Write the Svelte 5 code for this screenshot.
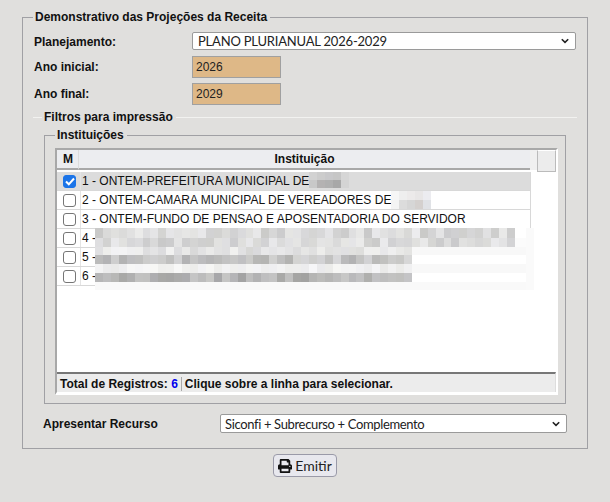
<script>
  // deterministic pixel noise for the redacted areas
  let n = 7;
  function noise() {
    n = (n * 137 + 59) % 1009;
    return n / 1009 - 0.5;
  }

  function cells(count, base, spread) {
    const out = [];
    for (let i = 0; i < count; i++) {
      const v = Math.round(base + noise() * spread);
      out.push(`rgb(${v},${v},${v + Math.round(noise() * 5)})`);
    }
    return out;
  }

  const bands = [
    { h: 10, cells: cells(53, 219, 36), tail: "#fff" },
    { h: 9, cells: cells(53, 218, 34), tail: "#fbfbfb" },
    { h: 8, cells: cells(40, 229, 28), tail: "#f8f8f8" },
    { h: 9, cells: cells(40, 197, 38), tail: "#fff" },
    { h: 9, cells: cells(40, 241, 14), tail: "#f8f8f8" },
    { h: 9, cells: cells(40, 182, 40), tail: "#fff" },
    { h: 8, cells: [], tail: "#f9f9f9" },
  ];

  const patchOne = [
    { h: 8, cells: ["#d2d2d2", "#cccccc", "#c8c8ca", "#c6c6c6", "#d6d6d6"] },
    { h: 8, cells: ["#c8c8c8", "#b4b2b2", "#b0b0b0", "#a8a8a8", "#d4d4d4"] },
  ];
  const patchTwo = [
    { h: 9, cells: ["#f6f6f6", "#eeeeee", "#eceaea", "#e8e6e6", "#ececf0"] },
    { h: 9, cells: ["#f4f4f4", "#dcdcdc", "#d6d6d6", "#d4d0ce", "#e0e2e6"] },
  ];
</script>

{#snippet mosaic(list)}
  {#each list as band}
    <div class="band" style:height="{band.h}px" style:background={band.tail}>
      {#each band.cells as c}
        <b style:background={c}></b>
      {/each}
    </div>
  {/each}
{/snippet}

{#snippet chevron()}
  <svg width="8" height="6" viewBox="0 0 8 6"><path d="M.8 1.2L4 4.4l3.200-3.200" fill="none" stroke="#222" stroke-width="1.6" /></svg>
{/snippet}

<main class="page">
  <fieldset class="outer">
    <legend>Demonstrativo das Projeções da Receita</legend>

    <div class="field plan">
      <span class="label">Planejamento:</span>
      <div class="select wide">
        <span>PLANO PLURIANUAL 2026-2029</span>
        {@render chevron()}
      </div>
    </div>
    <div class="field">
      <span class="label">Ano inicial:</span>
      <div class="year">2026</div>
    </div>
    <div class="field">
      <span class="label">Ano final:</span>
      <div class="year">2029</div>
    </div>

    <fieldset class="filters">
      <legend>Filtros para impressão</legend>

      <fieldset class="inst">
        <legend>Instituições</legend>

        <div class="grid">
          <div class="head">
            <div class="hm">M</div>
            <div class="ht">Instituição</div>
            <div class="gutter"></div>
            <div class="corner"></div>
          </div>
          <div class="body">
            <div class="row selected">
              <span class="check on">
                <svg width="10" height="9" viewBox="0 0 10 9"><path d="M1 4.500l2.800 2.800L9 1.500" fill="none" stroke="#fff" stroke-width="2" /></svg>
              </span>
              <div class="cell">1 - ONTEM-PREFEITURA MUNICIPAL DE<div class="patch">{@render mosaic(patchOne)}</div></div>
            </div>
            <div class="row">
              <span class="check"></span>
              <div class="cell">2 - ONTEM-CAMARA MUNICIPAL DE VEREADORES DE<div class="patch">{@render mosaic(patchTwo)}</div></div>
            </div>
            <div class="row">
              <span class="check"></span>
              <div class="cell">3 - ONTEM-FUNDO DE PENSAO E APOSENTADORIA DO SERVIDOR</div>
            </div>
            {#each [4, 5, 6] as id}
              <div class="row">
                <span class="check"></span>
                <div class="cell">{id} -</div>
              </div>
            {/each}
            <div class="blur">{@render mosaic(bands)}</div>
          </div>
          <div class="foot">
            <span class="total">Total de Registros: <em>6</em></span>
            <span class="hint">Clique sobre a linha para selecionar.</span>
          </div>
        </div>
      </fieldset>

      <div class="field resource">
        <span class="label">Apresentar Recurso</span>
        <div class="select res">
          <span>Siconfi + Subrecurso + Complemento</span>
          {@render chevron()}
        </div>
      </div>
    </fieldset>
  </fieldset>

  <div class="actions">
    <button type="button">
      <svg width="14" height="14" viewBox="0 0 512 512"><path fill="#111" d="M448 192V77.250c0-8.490-3.370-16.620-9.370-22.630L393.370 9.370c-6-6-14.140-9.370-22.630-9.370H96C78.330 0 64 14.330 64 32v160c-35.350 0-64 28.650-64 64v112c0 8.840 7.160 16 16 16h48v96c0 17.670 14.330 32 32 32h320c17.670 0 32-14.330 32-32v-96h48c8.840 0 16-7.160 16-16V256c0-35.350-28.650-64-64-64zm-64 256H128v-96h256v96zm0-224H128V64h192v48c0 8.840 7.160 16 16 16h48v96zm48 72c-13.250 0-24-10.750-24-24 0-13.260 10.750-24 24-24s24 10.740 24 24c0 13.250-10.750 24-24 24z" /></svg>
      Emitir
    </button>
  </div>
</main>

<style>
  :global(body) {
    margin: 0;
    background: #e0dfdd;
  }

  .page {
    width: 610px;
    height: 502px;
    padding: 10px 22px 0 22px;
    box-sizing: border-box;
    font-family: "Liberation Sans", Arial, sans-serif;
    font-size: 12px;
    color: #111;
    overflow: hidden;
  }

  fieldset {
    margin: 0;
    min-width: 0;
    border: 1px solid #a0a0a4;
    box-sizing: border-box;
  }

  legend {
    font-weight: bold;
    padding: 0 3px 0 2px;
    font-size: 12px;
    line-height: 14px;
  }

  .outer {
    padding: 8px 10px 15px 10px;
  }

  .field {
    display: flex;
    align-items: center;
    font-weight: bold;
    margin-left: 1px;
    height: 22px;
    margin-bottom: 5px;
  }

  .label {
    width: 158px;
    flex: none;
  }

  .field.plan {
    height: 18px;
    margin-bottom: 6px;
  }

  .plan .label {
    padding-top: 2px;
    line-height: 14px;
  }

  .select {
    height: 18px;
    flex: none;
    box-sizing: border-box;
    background: #fff;
    border: 1px solid #9a9a9a;
    border-radius: 2px;
    display: flex;
    align-items: center;
    justify-content: space-between;
    padding: 0 6px 0 5px;
    font-family: Lato, sans-serif;
    font-weight: normal;
    font-size: 13px;
    color: #222;
  }

  .wide {
    width: 384px;
    letter-spacing: -0.2px;
  }

  .year {
    width: 89px;
    height: 22px;
    box-sizing: border-box;
    background: #deb887;
    border: 1px solid #a0a0a0;
    padding-left: 3px;
    line-height: 20px;
    font-weight: normal;
    color: #222;
  }

  .filters {
    border-width: 1px 0 0 0;
    border-color: #f2f2f0;
    padding: 0 11px;
  }

  .filters > legend {
    margin-left: -2px;
  }

  .inst {
    height: 276px;
    padding: 6px 10px 0 10px;
    margin-top: 4px;
  }

  .grid {
    width: 503px;
    height: 247px;
    box-sizing: border-box;
    background: #fff;
    border-style: solid;
    border-width: 2px 2px 3px 2px;
    border-color: #a8a8a8 #fff #fff #a8a8a8;
    display: flex;
    flex-direction: column;
  }

  .head {
    height: 20px;
    flex: none;
    display: flex;
    align-items: flex-start;
    font-weight: bold;
  }

  .hm,
  .ht {
    height: 20px;
    box-sizing: border-box;
    background: #ecedf0;
    border-bottom: 2px solid #a8a8a8;
    text-align: center;
    line-height: 18px;
  }

  .hm {
    width: 22px;
    padding-left: 1px;
    border-right: 1px solid #dcdcdc;
  }

  .ht {
    width: 452px;
  }

  .gutter {
    width: 7px;
    height: 20px;
    background: #f0f0f0;
  }

  .corner {
    width: 19px;
    height: 22px;
    box-sizing: border-box;
    background: #ececec;
    border: 1px solid #bbb;
    border-top-color: #fff;
    position: relative;
    z-index: 1;
  }

  .body {
    flex: 1;
    padding-top: 2px;
    overflow: hidden;
    position: relative;
  }

  .row {
    display: flex;
    align-items: center;
    height: 19px;
    width: 474px;
    box-sizing: border-box;
    border-bottom: 1px solid #d8d8d8;
    border-right: 1px solid #d8d8d8;
  }

  .row.selected {
    background: #dcdcdc;
  }

  .check {
    width: 13px;
    height: 13px;
    box-sizing: border-box;
    flex: none;
    margin: 0 4px 0 6px;
    border: 1px solid #767676;
    border-radius: 3px;
    background: #fff;
    display: grid;
    place-items: center;
  }

  .check.on {
    background: #1b74e8;
    border-color: #1b74e8;
  }

  .cell {
    flex: 1;
    display: flex;
    align-items: center;
    height: 100%;
    white-space: pre;
    border-left: 1px solid #e4e4e4;
    padding-left: 1px;
  }

  .patch {
    align-self: flex-start;
    width: 40px;
  }

  .blur {
    position: absolute;
    left: 38px;
    top: 58px;
    width: 439px;
    border-right: 8px solid #fafafa;
    box-sizing: border-box;
  }

  .band {
    display: flex;
  }

  .band b {
    display: block;
    width: 7.930px;
    flex: none;
  }

  .patch b {
    width: 8px;
  }

  .foot {
    flex: none;
    height: 20px;
    padding-top: 2px;
    background: #ececec;
    border-top: 2px solid #777;
    border-right: 1px solid #ddd;
    display: flex;
    align-items: center;
    font-weight: bold;
    box-sizing: border-box;
  }

  .total {
    padding: 0 3px;
    border-right: 1px solid #aaa;
    line-height: 14px;
  }

  .total em {
    color: #0000ee;
    font-style: normal;
  }

  .hint {
    padding-left: 3px;
  }

  .field.resource {
    margin: 10px 0 0 -1px;
    height: 19px;
  }

  .resource .label {
    width: 177px;
  }

  .res {
    width: 347px;
    height: 19px;
    padding-left: 4px;
    margin-right: -3px;
    letter-spacing: -0.35px;
  }

  .actions {
    display: flex;
    justify-content: center;
    margin-top: 5px;
  }

  button {
    height: 23px;
    width: 64px;
    padding: 0;
    display: flex;
    align-items: center;
    justify-content: center;
    gap: 3px;
    background: #e8e8ee;
    border: 1px solid #9a9aa8;
    border-radius: 4px;
    font-family: Lato, sans-serif;
    font-size: 14px;
    color: #222;
  }
</style>
